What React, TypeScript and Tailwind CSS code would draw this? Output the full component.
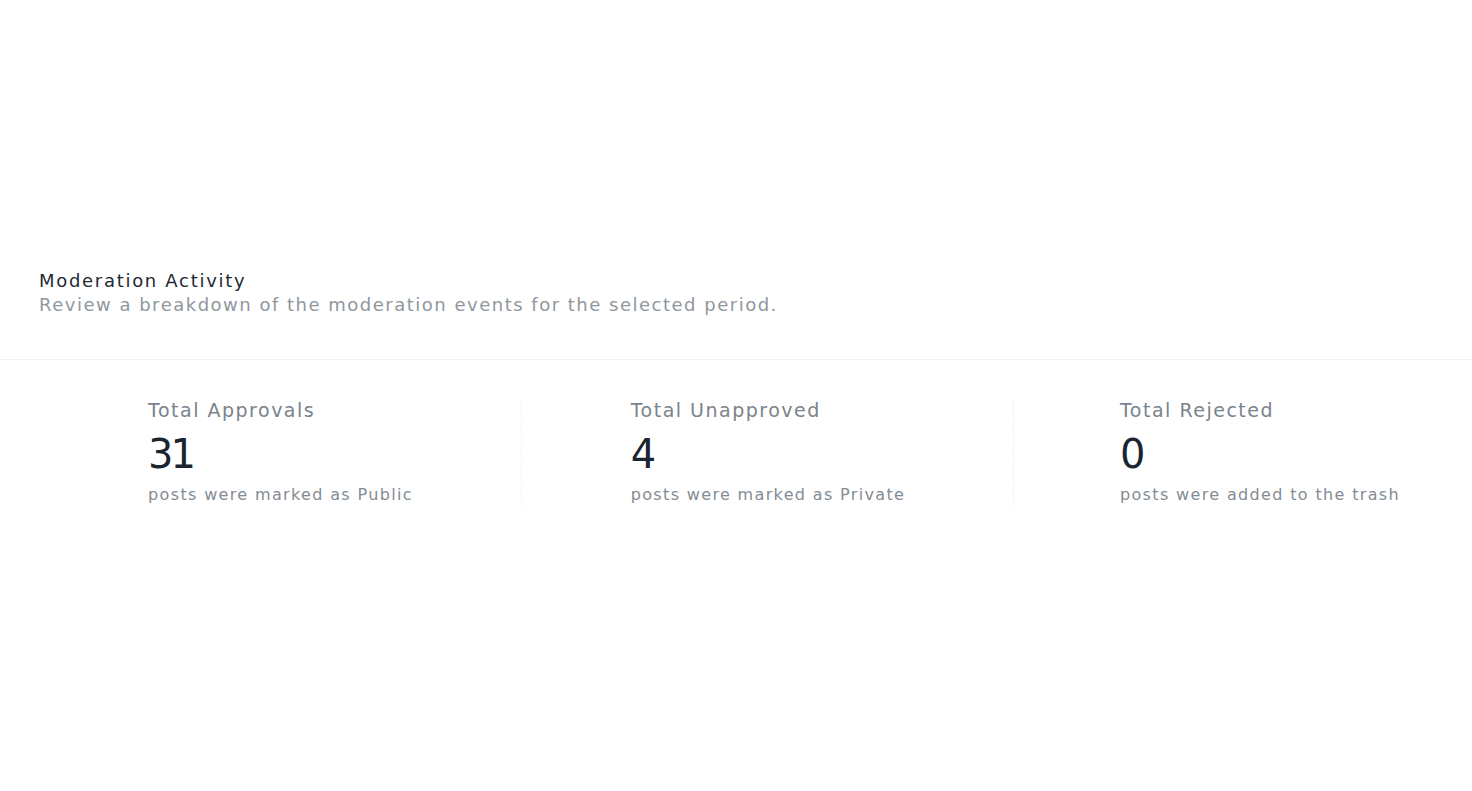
const stats = [
  { label: 'Total Approvals', value: '31', note: 'posts were marked as Public', width: 'w-[482px]' },
  { label: 'Total Unapproved', value: '4', note: 'posts were marked as Private', width: 'w-[492px]' },
  { label: 'Total Rejected', value: '0', note: 'posts were added to the trash', width: 'w-[492px]' },
];

export default function App() {
  return (
    <div
      className="min-h-[791px] w-full overflow-hidden bg-white"
      style={{ fontFamily: '"DejaVu Sans", "Noto Sans", sans-serif' }}
    >
      <div className="pt-[269px]">
        {/* Header */}
        <div className="px-[39px] pb-[42px]">
          <h2 className="text-[18px] leading-[24px] font-medium tracking-[1.7px] text-[#1f2933]">Moderation Activity</h2>
          <p className="text-[18px] leading-[24px] tracking-[1.5px] text-[#8f979e]">
            Review a breakdown of the moderation events for the selected period.
          </p>
        </div>

        <div className="border-t border-[#f0f1f2]" />

        {/* Stats */}
        <div className="flex pl-[39px] pt-[39px] w-[1540px]">
          {stats.map((s, i) => (
            <div
              key={s.label}
              className={`${s.width} shrink-0 flex justify-center ${i > 0 ? 'border-l border-dashed border-[#f0f1f2]' : ''}`}
            >
              <div className="pl-[1px]">
                <div className="text-[19px] leading-[23px] tracking-[1.5px] text-[#7a838c]">{s.label}</div>
                <div className="mt-[10px] text-[40px] leading-[44px] tracking-[-3px] text-[#1b2530]">{s.value}</div>
                <div className="mt-[8px] text-[16px] leading-[22px] tracking-[1.35px] text-[#838c94]">{s.note}</div>
              </div>
            </div>
          ))}
        </div>
      </div>
    </div>
  );
}
